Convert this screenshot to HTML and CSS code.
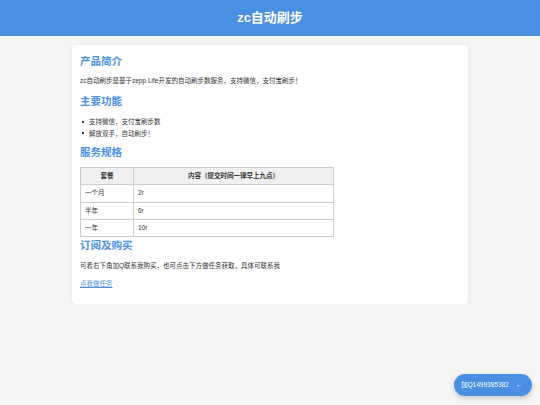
FILE: index.html
```html
<!DOCTYPE html>
<html lang="zh-CN">
<head>
  <meta charset="UTF-8">
  <meta name="viewport" content="width=device-width, initial-scale=1.0">
  <title>zc自动刷步</title>
  <link rel="stylesheet" href="styles.css">
</head>
<body>
  <header class="top">
    <h1>zc自动刷步</h1>
  </header>

  <main class="card">
    <h2>产品简介</h2>
    <p>zc自动刷步是基于zepp Life开发的自动刷步数服务，支持微信，支付宝刷步！</p>

    <h2>主要功能</h2>
    <ul class="features">
      <li>支持微信，支付宝刷步数</li>
      <li>解放双手，自动刷步！</li>
    </ul>

    <h2>服务规格</h2>
    <table class="plans">
      <tr>
        <th class="col-plan">套餐</th>
        <th>内容（提交时间一律早上九点）</th>
      </tr>
      <tr><td>一个月</td><td>2r</td></tr>
      <tr><td>半年</td><td>6r</td></tr>
      <tr><td>一年</td><td>10r</td></tr>
    </table>

    <h2>订阅及购买</h2>
    <p>可看右下角加Q联系我购买，也可点击下方做任务获取，具体可联系我</p>
    <p class="last"><a href="#">点我做任务</a></p>
  </main>

  <a class="contact" href="#">加Q1499385382 <span class="arrow">&larr;</span></a>
</body>
</html>
```

FILE: styles.css
```css
body {
  margin: 0;
  font-family: "Liberation Sans", "Noto Sans CJK SC", sans-serif;
  font-size: 6.5px;
  line-height: 1.6;
  background: #f5f5f5;
  color: #333;
}
.top {
  height: 36px;
  background: #4a90e2;
  display: flex;
  align-items: center;
  justify-content: center;
}
.top h1 {
  margin: 0;
  color: #fff;
  font-size: 13px;
  font-weight: bold;
}
.card {
  width: 396px;
  box-sizing: border-box;
  margin: 9px auto 0;
  padding: 10px 8px 6px;
  background: #fff;
  border-radius: 4px;
  box-shadow: 0 1px 4px rgba(0, 0, 0, 0.08);
}
.card h2 {
  margin: 0 0 8px;
  font-size: 10.5px;
  line-height: 13.2px;
  color: #4a90e2;
}
.card p {
  margin: 0 0 8.5px;
}
.card p.last {
  margin-bottom: 8px;
}
.card a {
  color: #4a90e2;
}
.features {
  margin: 0 0 6.5px;
  padding-left: 8px;
  line-height: 11.4px;
  list-style: none;
}
.features li::before {
  content: "";
  display: inline-block;
  width: 2px;
  height: 2px;
  background: #333;
  margin: 0 5px 1px -6px;
  vertical-align: middle;
}
.plans {
  width: 254px;
  border-collapse: collapse;
  margin: 0 0 2px;
}
.plans th,
.plans td {
  border: 1px solid #ccc;
  padding: 3px 4px;
  text-align: left;
  font-weight: normal;
}
.plans th {
  background: #f0f0f0;
  font-weight: bold;
  text-align: center;
}
.plans .col-plan {
  width: 44px;
}
.contact {
  position: fixed;
  right: 8px;
  bottom: 9px;
  height: 22px;
  padding: 0 9px 0 7.5px;
  display: flex;
  align-items: center;
  gap: 7px;
  border-radius: 11px;
  background: #4a90e2;
  color: #fff;
  text-decoration: none;
  box-shadow: 0 2px 5px rgba(0, 0, 0, 0.2);
}
.contact .arrow {
  font-size: 7px;
}
```
